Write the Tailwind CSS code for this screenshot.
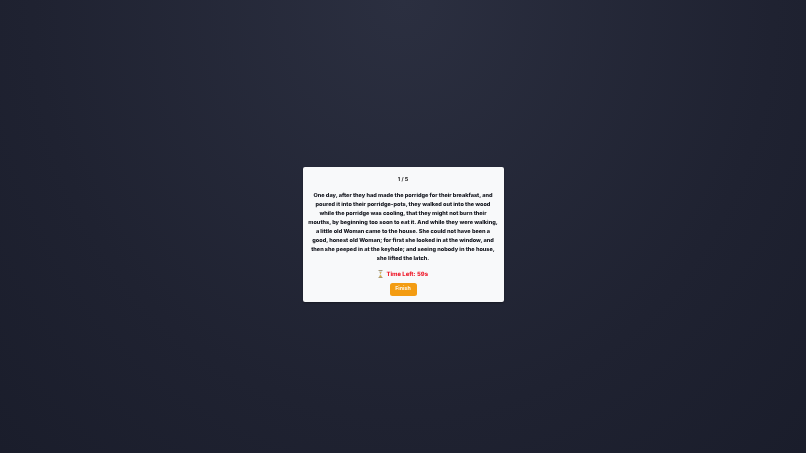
<!doctype html>
<html><head><meta charset="utf-8"><script src="https://cdn.jsdelivr.net/npm/@tailwindcss/browser@4"></script></head>
<body class="m-0">
<main class="w-[806px] h-[453px] overflow-hidden flex items-center justify-center bg-[radial-gradient(ellipse_at_50%_0%,#2b2f40_0%,#1f2231_65%,#1a1d2b_100%)] font-['Inter',sans-serif]">
<section class="w-[201px] h-[135px] mt-[16px] rounded-[2px] bg-[#f8f9fa] shadow-[0_1px_2px_rgba(0,0,0,0.3)] flex flex-col items-center px-[5px] pt-[9px] [text-rendering:geometricPrecision]">
<p class="text-[5.4px] leading-[7px] font-bold text-[#222] blur-[0.2px] mt-[0.5px]">1 / 5</p>
<p class="mt-[8.500px] w-full text-center text-[5.55px] leading-[9.06px] font-extrabold text-[#15171f] whitespace-nowrap blur-[0.2px]">One day, after they had made the porridge for their breakfast, and<br>poured it into their porridge-pots, they walked out into the wood<br>while the porridge was cooling, that they might not burn their<br>mouths, by beginning too soon to eat it. And while they were walking,<br>a little old Woman came to the house. She could not have been a<br>good, honest old Woman; for first she looked in at the window, and<br>then she peeped in at the keyhole; and seeing nobody in the house,<br>she lifted the latch.</p>
<div class="mt-[5px] flex items-center gap-[3.500px] text-[5.9px] leading-[9px] font-extrabold text-[#ef1f2f] blur-[0.2px]">
<svg class="w-[5px] h-[8px]" viewBox="0 0 10 16"><path d="M1 1h8M1 15h8" stroke="#a8997a" stroke-width="2"/><path d="M2 2h6c0 3-2 4.500-2.400 6C6 9.500 8 11 8 14H2c0-3 2-4.500 2.400-6C4 6.500 2 5 2 2z" fill="#d4dde0"/><path d="M3 4.500h4L5 8zM2.500 14c.4-2 2-3.400 2.500-4 .5.600 2.100 2 2.500 4z" fill="#dcaa35"/></svg>
<span>Time Left: 59s</span></div>
<button class="mt-[4.500px] w-[27px] h-[12.500px] rounded-[2.500px] bg-[#f39c12] text-[#fdf3e0] text-[5.300px] font-bold flex items-center justify-center"><span class="blur-[0.2px]">Finish</span></button>
</section>
</main>
</body></html>
